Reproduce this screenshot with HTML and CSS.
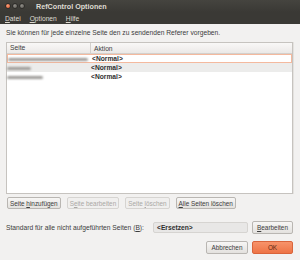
FILE: index.html
```html
<!DOCTYPE html>
<html lang="de">
<head>
  <meta charset="UTF-8" />
  <title>RefControl Optionen</title>
  <link rel="stylesheet" href="styles.css">
</head>
<body>
<div class="window">
  <!-- Title bar -->
  <div class="titlebar">
    <div class="controls">
      <span class="ctl close"></span>
      <span class="ctl"></span>
      <span class="ctl"></span>
    </div>
    <div class="title">RefControl Optionen</div>
  </div>

  <!-- Menu -->
  <div class="menubar">
    <span><u>D</u>atei</span>
    <span><u>O</u>ptionen</span>
    <span><u>H</u>ilfe</span>
  </div>

  <div class="content">
    <p class="intro">Sie können für jede einzelne Seite den zu sendenden Referer vorgeben.</p>

    <div class="list">
      <div class="list-head">
        <div class="col-site">Seite</div>
        <div class="col-action">Aktion</div>
      </div>
      <div class="row selected">
        <div class="col-site"><span class="blur w-long"></span></div>
        <div class="col-action">&lt;Normal&gt;</div>
      </div>
      <div class="row odd">
        <div class="col-site"><span class="blur w-short"></span></div>
        <div class="col-action">&lt;Normal&gt;</div>
      </div>
      <div class="row">
        <div class="col-site"><span class="blur w-mid"></span></div>
        <div class="col-action">&lt;Normal&gt;</div>
      </div>
    </div>

    <div class="list-buttons">
      <button class="btn">Seite <u>h</u>inzufügen</button>
      <button class="btn" disabled>S<u>e</u>ite bearbeiten</button>
      <button class="btn" disabled>Seite <u>l</u>öschen</button>
      <button class="btn"><u>A</u>lle Seiten löschen</button>
    </div>

    <!-- Default action + dialog buttons share one grid -->
    <div class="footer">
      <span class="label">Standard für alle nicht aufgeführten Seiten (<u>B</u>):</span>
      <div class="field">&lt;Ersetzen&gt;</div>
      <button class="btn side"><u>B</u>earbeiten</button>
      <button class="btn cancel">Abbrechen</button>
      <button class="btn ok">OK</button>
    </div>
  </div>
</div>
</body>
</html>
```

FILE: styles.css
```css
* {
  box-sizing: border-box;
}

body {
  margin: 0;
  font-family: "Liberation Sans", sans-serif;
  font-size: 6.7px;
  color: #3c3c3c;
  background-color: #f2f1f0;
}

.window {
  width: 300px;
  height: 260px;
  display: flex;
  flex-direction: column;
  overflow: hidden;
}

/* Title bar */
.titlebar {
  height: 12px;
  background: linear-gradient(#45443f, #3a3935);
  display: flex;
  align-items: center;
  padding-left: 5px;
}
.controls {
  display: flex;
  gap: 1px;
  width: 31px;
}
.ctl {
  width: 6px;
  height: 6px;
  border-radius: 50%;
  background: radial-gradient(circle at 40% 35%, #8e8c86, #5e5c57);
  border: 0.5px solid #2e2d2a;
}
.ctl.close {
  background: radial-gradient(circle at 40% 35%, #f7a07c, #e2562a);
}
.title {
  color: #dfdbd2;
  font-weight: bold;
  font-size: 7.2px;
}

/* Menu bar */
.menubar {
  height: 12px;
  background-color: #3a3935;
  color: #dfdbd2;
  display: flex;
  align-items: center;
  gap: 9px;
  padding-left: 5px;
}

/* Content */
.content {
  flex: 1;
  padding: 4px 7px 0 6px;
  display: flex;
  flex-direction: column;
}
.intro {
  margin: 0 0 5px 0;
  height: 9px;
  line-height: 9px;
}

/* List */
.list {
  height: 152px;
  background: #fff;
  border: 1px solid #c6c3bf;
  box-shadow: 1px 0 0 #e4e2df;
}
.list-head {
  height: 11px;
  display: flex;
  align-items: center;
  background: linear-gradient(#f9f8f7, #ebe9e7);
  border-bottom: 1px solid #d3d0cc;
}
.list-head .col-site {
  border-right: 1px solid #d3d0cc;
  height: 10px;
  line-height: 10px;
}
.col-site {
  width: 84px;
  padding-left: 3px;
}
.col-action {
  padding-left: 3px;
}
.row {
  height: 9px;
  display: flex;
  align-items: center;
  font-weight: bold;
  color: #2e2e2e;
}
.row .col-site {
  padding-left: 0;
  width: 84px;
}
.row .col-action {
  padding-left: 0;
}
.row.selected {
  border: 1px solid #f4b99e;
}
.row.odd {
  background-color: #ececeb;
}
.blur {
  display: inline-block;
  height: 3px;
  background: #9c9a97;
  border-radius: 2px;
  filter: blur(0.8px);
  vertical-align: middle;
}
.w-long { width: 80px; }
.w-short { width: 24px; }
.w-mid { width: 36px; }

/* Buttons */
.btn {
  font-family: inherit;
  font-size: 6.4px;
  color: #3c3c3c;
  height: 12px;
  padding: 0 2px;
  border: 1px solid #b9b6b2;
  border-radius: 2px;
  background: linear-gradient(#f7f6f5, #e3e1de);
  white-space: nowrap;
}
.btn:disabled {
  color: #aaa8a5;
  border-color: #d6d4d1;
  background: #f0efee;
}
.list-buttons {
  display: flex;
  gap: 6px;
  margin-top: 3px;
  padding-left: 1px;
}

/* Footer grid: label | field | button, then the dialog buttons */
.footer {
  display: grid;
  grid-template-columns: 1fr 95px 41px;
  grid-template-rows: 13px 13px;
  column-gap: 4px;
  row-gap: 7px;
  align-items: center;
  margin-top: 12px;
}
.label {
  white-space: nowrap;
}
.field {
  height: 11px;
  line-height: 9px;
  padding-left: 3px;
  background-color: #e8e7e6;
  border: 1px solid #d6d4d1;
  border-radius: 2px;
  font-weight: bold;
  color: #2e2e2e;
}
.btn.side {
  height: 13px;
}
.btn.cancel {
  grid-column: 2;
  grid-row: 2;
  justify-self: end;
  width: 42px;
  height: 13px;
}
.btn.ok {
  grid-column: 3;
  grid-row: 2;
  height: 13px;
  color: #5a2a14;
  border-color: #d9643b;
  background: linear-gradient(#f7936a, #ee7446);
}
```
